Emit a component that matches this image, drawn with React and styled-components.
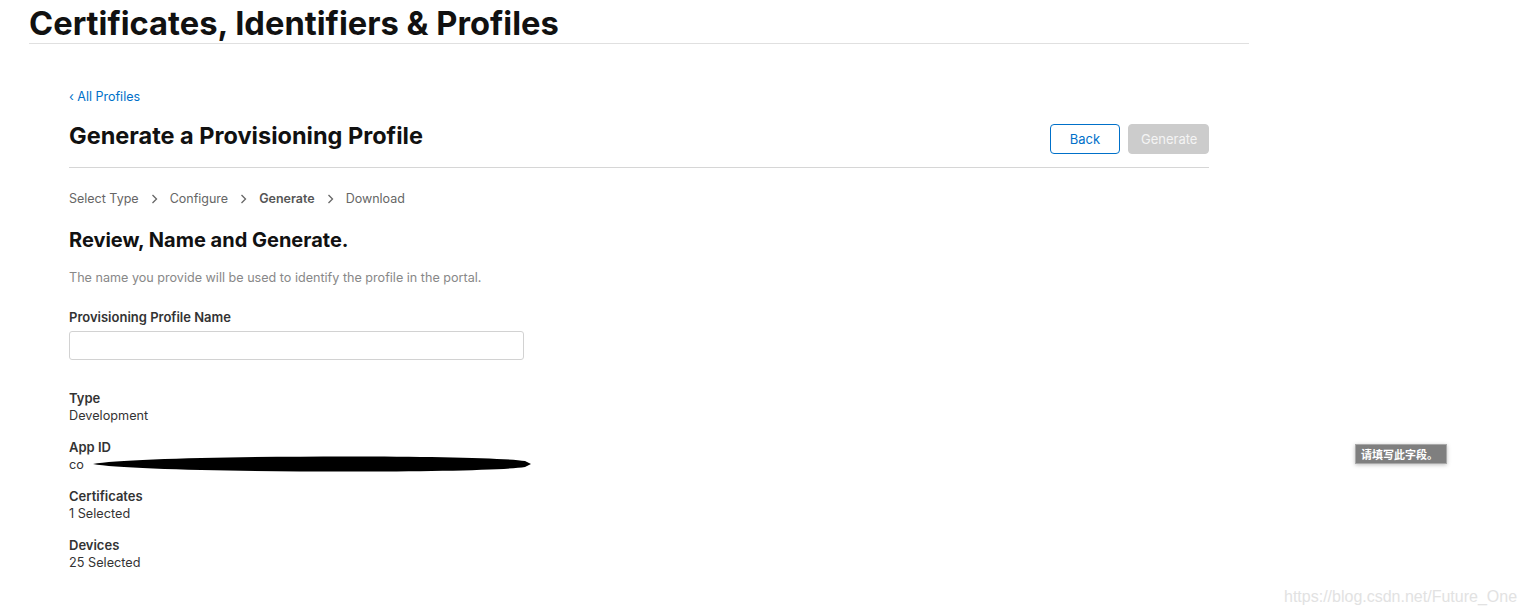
import React from 'react';
import styled, { createGlobalStyle } from 'styled-components';

const Global = createGlobalStyle`
  html, body { margin: 0; padding: 0; background: #fff; }
  body { font-family: Inter, "Noto Sans", "Liberation Sans", sans-serif; color: #111; }
  * { box-sizing: border-box; }
`;

const Page = styled.div`
  position: relative;
  width: 1523px;
  height: 616px;
  overflow: hidden;
  padding-left: 29px;
`;

const Header = styled.header`
  width: 1220px;
  border-bottom: 1px solid #e0e0e0;
  padding-top: 3px;
  height: 44px;
`;

const Title = styled.h1`
  margin: 0;
  font-size: 32.7px;
  line-height: 40px;
  font-weight: 700;
  color: #111;
`;

const Main = styled.main`
  margin-left: 40px;
  width: 1140px;
  padding-top: 45px;
`;

const BackLink = styled.a`
  display: block;
  font-size: 12.5px;
  line-height: 16px;
  color: #0070c9;
  text-decoration: none;
`;

const TopRow = styled.div`
  display: flex;
  align-items: flex-end;
  justify-content: space-between;
  border-bottom: 1px solid #d6d6d6;
  padding-top: 16px;
  padding-bottom: 13px;
`;

const PageTitle = styled.h2`
  margin: 0 0 3px;
  font-size: 23.5px;
  line-height: 30px;
  font-weight: 700;
  color: #111;
`;

const Buttons = styled.div`
  display: flex;
  gap: 8px;
`;

const Button = styled.button`
  height: 30px;
  padding: 0 12px;
  font-family: inherit;
  font-size: 13px;
  border-radius: 4px;
  border: 1px solid ${p => (p.$disabled ? '#cccccc' : '#0070c9')};
  background: ${p => (p.$disabled ? '#cccccc' : '#fff')};
  color: ${p => (p.$disabled ? '#f4f4f4' : '#0070c9')};
  width: ${p => p.$w}px;
`;

const Steps = styled.nav`
  display: flex;
  align-items: center;
  gap: 12px;
  margin-top: 23px;
  font-size: 12.5px;
  line-height: 16px;
  color: #666;
`;

const Step = styled.span`
  font-weight: ${p => (p.$active ? 600 : 400)};
  color: ${p => (p.$active ? '#555' : '#666')};
`;

const Chevron = () => (
  <svg width="7" height="10" viewBox="0 0 7 10">
    <path d="M1.5 1l4 4-4 4" fill="none" stroke="#666" strokeWidth="1.3" />
  </svg>
);

const Section = styled.h3`
  margin: 20px 0 0;
  font-size: 20px;
  line-height: 26px;
  font-weight: 700;
  color: #111;
`;

const Hint = styled.p`
  margin: 17px 0 0;
  font-size: 12.6px;
  line-height: 16px;
  color: #888;
`;

const Label = styled.label`
  display: block;
  margin-top: 23px;
  font-size: 13px;
  line-height: 16px;
  font-weight: 600;
  color: #333;
`;

const Input = styled.input`
  display: block;
  margin-top: 6px;
  width: 455px;
  height: 29px;
  border: 1px solid #d2d2d2;
  border-radius: 3px;
  outline: none;
`;

const Details = styled.dl`
  margin: 29px 0 0;
`;

const Item = styled.div`
  margin-bottom: 13px;
`;

const Term = styled.dt`
  font-size: 13px;
  line-height: 18px;
  font-weight: 600;
  color: #333;
`;

const Value = styled.dd`
  margin: 0;
  font-size: 12.7px;
  line-height: 18px;
  color: #333;
  position: relative;
`;

const Scribble = styled.svg`
  position: absolute;
  left: 22px;
  top: -3px;
`;

const Tooltip = styled.div`
  position: absolute;
  left: 1355px;
  top: 444px;
  width: 92px;
  height: 20px;
  background: #7f7f7f;
  border: 1px solid #a8a8a8;
  box-shadow: 0 1px 4px rgba(0,0,0,0.25);
  color: #fff;
  font-family: "Noto Sans CJK SC", sans-serif;
  font-size: 11px;
  font-weight: 700;
  line-height: 18px;
  padding-left: 5px;
`;

const Watermark = styled.div`
  position: absolute;
  left: 1284px;
  top: 588px;
  font-family: "Liberation Sans", Arial, sans-serif;
  font-size: 16px;
  color: #e2e2e2;
`;

const details = [
  ['Type', 'Development'],
  ['App ID', 'co', true],
  ['Certificates', '1 Selected'],
  ['Devices', '25 Selected'],
];

export default function App() {
  return (
    <Page>
      <Global />
      <Header>
        <Title>Certificates, Identifiers &amp; Profiles</Title>
      </Header>
      <Main>
        <BackLink href="#">‹ All Profiles</BackLink>
        <TopRow>
          <PageTitle>Generate a Provisioning Profile</PageTitle>
          <Buttons>
            <Button $w={70}>Back</Button>
            <Button $w={81} $disabled>Generate</Button>
          </Buttons>
        </TopRow>
        <Steps>
          <Step>Select Type</Step>
          <Chevron />
          <Step>Configure</Step>
          <Chevron />
          <Step $active>Generate</Step>
          <Chevron />
          <Step>Download</Step>
        </Steps>
        <Section>Review, Name and Generate.</Section>
        <Hint>The name you provide will be used to identify the profile in the portal.</Hint>
        <Label>Provisioning Profile Name</Label>
        <Input type="text" />
        <Details>
          {details.map(([t, v, hidden]) => (
            <Item key={t}>
              <Term>{t}</Term>
              <Value>
                {v}
                {hidden && (
                  <Scribble width="442" height="22" viewBox="0 0 442 22">
                    <path d="M2 11 C 50 2, 390 1, 434 8 L 440 11 L 434 14 C 390 21, 50 20, 2 11 Z" fill="#000" />
                  </Scribble>
                )}
              </Value>
            </Item>
          ))}
        </Details>
      </Main>
      <Tooltip>请填写此字段。</Tooltip>
      <Watermark>https://blog.csdn.net/Future_One</Watermark>
    </Page>
  );
}
